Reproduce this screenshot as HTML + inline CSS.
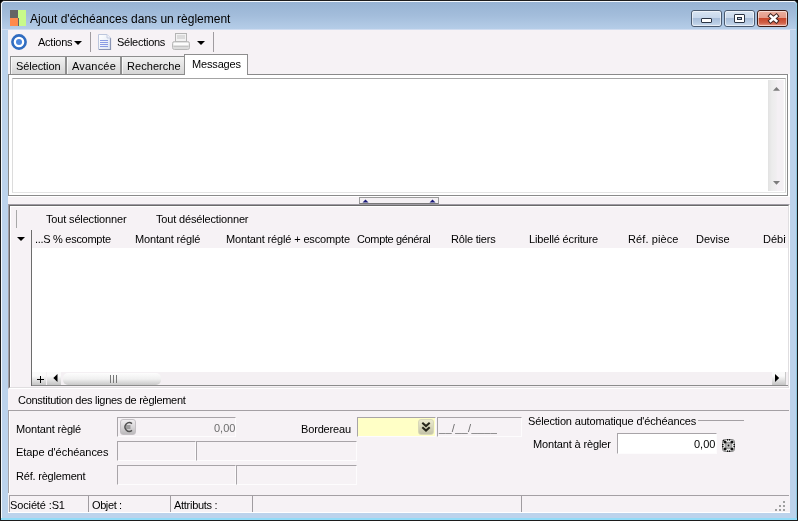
<!DOCTYPE html>
<html><head><meta charset="utf-8">
<style>
*{margin:0;padding:0;box-sizing:border-box}
html,body{width:798px;height:521px;overflow:hidden;background:#000}
body{position:relative;will-change:transform;font-family:"Liberation Sans",sans-serif;font-size:11px;color:#000}
.a{position:absolute}
.t{position:absolute;font-size:11px;line-height:13px;white-space:nowrap}
#frame{left:0;top:0;width:798px;height:521px;background:#bcd3ec;border-radius:5px 5px 0 0;border:1px solid #1c1c1c}
#hl{left:1px;top:1px;width:796px;height:519px;border:1px solid #f4f8fc;border-right-color:#8ec6de;border-radius:4px 4px 0 0;border-bottom:none}
#title{left:2px;top:2px;width:794px;height:27px;background:linear-gradient(#97b3d3,#a3bddb 50%,#b5cde8);border-radius:3px 3px 0 0}
#client{left:8px;top:30px;width:782px;height:482px;background:#f6f2f5;border-bottom:1px solid #fff}
.tb{position:absolute;top:10px;height:17px;width:31px;border:1px solid #4a5a70;border-radius:3px;
 background:linear-gradient(#d8e4f2,#c8d8ec 45%,#a6bcd8 46%,#b8cce4 80%,#cddcee)}
.tb:before{content:"";position:absolute;left:0;top:0;right:0;bottom:0;border:1px solid rgba(255,255,255,.55);border-radius:2px}
#close{background:linear-gradient(#eab0a0,#e49a88 45%,#c8482c 50%,#d06048 80%,#e8a090);border-color:#3a1a14}
.sep{position:absolute;width:1px;background:#a09ca0}
.tab{position:absolute;top:56px;height:19px;border:1px solid #8e8e8e;border-bottom:none;background:linear-gradient(#f2f2f2,#d4d4d4)}
.tab:before{content:"";position:absolute;left:0;top:0;width:1px;bottom:0;background:rgba(255,255,255,.7)}
.fld{position:absolute;border-top:1px solid #a8a4a8;border-left:1px solid #a8a4a8;border-right:1px solid #fdfcfd;border-bottom:1px solid #fdfcfd}
</style></head><body>
<div id="frame" class="a"></div>
<div id="hl" class="a"></div>
<div id="title" class="a"></div>
<!-- app icon -->
<div class="a" style="left:10px;top:10px;width:8px;height:8px;background:#646464"></div>
<div class="a" style="left:10px;top:18px;width:8px;height:8px;background:#ff8a4c"></div>
<div class="a" style="left:18px;top:10px;width:8px;height:16px;background:#c8fa8a"></div>
<div class="a" style="left:18px;top:18px;width:1px;height:8px;background:#646464"></div>
<div class="t" style="left:30px;top:12px;font-size:12px;line-height:14px">Ajout d'échéances dans un règlement</div>
<!-- title buttons -->
<div class="tb" style="left:691px"><div class="a" style="left:9px;top:7px;width:11px;height:5px;border:1px solid #2a3444;background:#fff;border-radius:1px"></div></div>
<div class="tb" style="left:724px"><div class="a" style="left:9px;top:3px;width:11px;height:9px;border:1px solid #2a3444;background:#fff;border-radius:1px"><div class="a" style="left:2px;top:2px;width:5px;height:3px;border:1px solid #2a3444;background:#b8c8dc"></div></div></div>
<div class="tb" id="close" style="left:757px;width:31px">
<svg class="a" style="left:9px;top:2px" width="13" height="11" viewBox="0 0 13 11"><path d="M3.6 3L9.4 8M9.4 3L3.6 8" stroke="#402420" stroke-width="4.4" stroke-linecap="square"/><path d="M3.6 3L9.4 8M9.4 3L3.6 8" stroke="#fff" stroke-width="2.4" stroke-linecap="square"/></svg>
</div>

<div class="a" style="left:2px;top:29px;width:794px;height:1px;background:#d0dcf0"></div>
<div id="client" class="a" style="height:483px"></div>
<div class="a" style="left:1px;top:518px;width:796px;height:2px;background:#92dcf8"></div>

<!-- toolbar -->
<svg class="a" style="left:11px;top:34px" width="16" height="16" viewBox="0 0 16 16"><circle cx="8" cy="8" r="6.6" fill="#fff" stroke="#2f6cc0" stroke-width="2.6"/><circle cx="8" cy="8" r="3" fill="#4a86dc"/></svg>
<div class="t" style="left:38px;top:36px;letter-spacing:-0.25px">Actions</div>
<svg class="a" style="left:74px;top:41px" width="8" height="4"><path d="M0 0H8L4 4Z" fill="#000"/></svg>
<div class="sep" style="left:90px;top:32px;height:20px"></div>
<svg class="a" style="left:98px;top:34px" width="14" height="16" viewBox="0 0 14 16"><defs><linearGradient id="dg" x1="0" y1="0" x2="1" y2="1"><stop offset="0" stop-color="#fff"/><stop offset="1" stop-color="#dde6f4"/></linearGradient></defs>
<path d="M0.5 0.5H9L12.5 4V15.5H0.5Z" fill="url(#dg)" stroke="#bcc6dc"/>
<path d="M12.5 4V15.5H1" fill="none" stroke="#8a94b4" stroke-width="1.2"/>
<path d="M9 0.5V4H12.5" fill="#eef2fa" stroke="#c4cce0"/>
<path d="M2 6.5H10M2 8.5H10M2 10.5H10M2 12.5H10" stroke="#8a9ce4"/>
</svg>
<div class="t" style="left:117px;top:36px;letter-spacing:-0.27px">Sélections</div>
<svg class="a" style="left:172px;top:33px" width="19" height="18" viewBox="0 0 19 18"><rect x="3.5" y="0.5" width="11" height="9" fill="#f2f2f2" stroke="#b4b4b4"/><path d="M5 3H13M5 5H13" stroke="#d4d4d4" stroke-width="1.5"/><rect x="0.5" y="8.5" width="17" height="8" rx="2" fill="#dedede" stroke="#b8b8b8"/><path d="M1.5 11H16.5" stroke="#fcfcfc" stroke-width="2.2"/><path d="M1.5 13.5H16.5" stroke="#c4c4c4" stroke-width="1"/><path d="M1.5 15H16.5" stroke="#d8d8d8" stroke-width="1.2"/></svg>
<svg class="a" style="left:197px;top:41px" width="8" height="4"><path d="M0 0H8L4 4Z" fill="#000"/></svg>
<div class="sep" style="left:213px;top:32px;height:20px"></div>

<!-- tabs -->
<div class="tab" style="left:10px;width:56px"></div>
<div class="tab" style="left:66px;width:55px"></div>
<div class="tab" style="left:121px;width:64px"></div>
<div class="a" style="left:184px;top:54px;width:64px;height:22px;border:1px solid #8e8e8e;border-bottom:none;background:#fff"></div>
<div class="t" style="left:16px;top:60px;letter-spacing:-0.09px">Sélection</div>
<div class="t" style="left:72px;top:60px;letter-spacing:0.2px">Avancée</div>
<div class="t" style="left:127px;top:60px;letter-spacing:0.05px">Recherche</div>
<div class="t" style="left:192px;top:58px;letter-spacing:-0.16px">Messages</div>

<!-- messages panel -->
<div class="a" style="left:8px;top:74px;width:780px;height:122px;border:1px solid #8a8a8a;background:#fff"></div>
<div class="a" style="left:185px;top:74px;width:62px;height:2px;background:#fff"></div>
<div class="a" style="left:12px;top:78px;width:774px;height:115px;border:1px solid #dcdcdc;border-top-color:#a4a4a4;border-right-color:#d8d8d8;border-bottom-color:#e4e4e4;background:#fff"></div>
<div class="a" style="left:768px;top:80px;width:16px;height:111px;background:linear-gradient(90deg,#e2e2e2,#ececec 25%,#f0eef0 50%,#f4f0f4 60%,#f4f0f4 95%,#fafafa)"></div>
<div class="a" style="left:788px;top:74px;width:2px;height:123px;background:#fff"></div>
<svg class="a" style="left:772px;top:86px" width="9" height="6"><path d="M1 4.8H8L4.5 1Z" fill="#7c7c7c"/></svg>
<svg class="a" style="left:772px;top:180px" width="9" height="6"><path d="M1 1H8L4.5 4.8Z" fill="#7c7c7c"/></svg>

<!-- splitter -->
<div class="a" style="left:8px;top:196px;width:781px;height:1px;background:#fff"></div>
<div class="a" style="left:359px;top:197px;width:80px;height:7px;border:1px solid #9c9c9c;border-bottom-color:#7a7a7a;background:#f4f0f3"></div>
<svg class="a" style="left:362px;top:199px" width="8" height="4"><path d="M0.5 3.5H6.5L3.5 0.5Z" fill="#1a1a78"/></svg>
<svg class="a" style="left:429px;top:199px" width="8" height="4"><path d="M0.5 3.5H6.5L3.5 0.5Z" fill="#1a1a78"/></svg>

<!-- grid panel -->
<div class="a" style="left:8px;top:204px;width:782px;height:185px;border-top:1px solid #a09ca4;border-left:1px solid #a09ca4;border-right:1px solid #fff;border-bottom:1px solid #fff"></div>
<div class="a" style="left:9px;top:205px;width:780px;height:183px;border-top:1px solid #6a6a6a;border-left:1px solid #6a6a6a;border-right:1px solid #e0dee0;border-bottom:1px solid #e0dee0"></div>
<div class="a" style="left:10px;top:206px;width:778px;height:1px;background:#fff"></div>
<div class="a" style="left:10px;top:206px;width:1px;height:181px;background:#fff"></div>
<div class="sep" style="left:16px;top:210px;height:18px;background:#a8a8a8"></div>
<div class="t" style="left:46px;top:213px;letter-spacing:-0.16px">Tout sélectionner</div>
<div class="t" style="left:156px;top:213px;letter-spacing:-0.16px">Tout désélectionner</div>

<svg class="a" style="left:17px;top:237px" width="8" height="4"><path d="M0 0H8L4 4Z" fill="#000"/></svg>
<div class="a" style="left:31px;top:248px;width:757px;height:125px;background:#fff"></div>
<div class="a" style="left:31px;top:230px;width:1px;height:156px;background:#6c6c6c"></div>
<div class="t" style="left:35px;top:233px;letter-spacing:-0.29px">...S % escompte</div>
<div class="t" style="left:135px;top:233px;letter-spacing:-0.15px">Montant réglé</div>
<div class="t" style="left:226px;top:233px;letter-spacing:-0.15px">Montant réglé + escompte</div>
<div class="t" style="left:357px;top:233px;letter-spacing:-0.36px">Compte général</div>
<div class="t" style="left:451px;top:233px;letter-spacing:-0.2px">Rôle tiers</div>
<div class="t" style="left:529px;top:233px;letter-spacing:-0.16px">Libellé écriture</div>
<div class="t" style="left:628px;top:233px;letter-spacing:0.09px">Réf. pièce</div>
<div class="t" style="left:696px;top:233px">Devise</div>
<div class="a" style="left:763px;top:230px;width:23px;height:17px;overflow:hidden"><div class="t" style="left:0;top:3px">Débit</div></div>
<!-- h scrollbar -->
<div class="a" style="left:32px;top:372px;width:756px;height:14px;background:#f4f0f3;border-bottom:1px solid #8c8c8c"></div>
<div class="a" style="left:32px;top:372px;width:14px;height:13px;background:linear-gradient(#fafafa 30%,#c4c4c4)"></div>
<svg class="a" style="left:37px;top:376px" width="7" height="7"><path d="M3.5 0V7M0 3.5H7" stroke="#000" stroke-width="1"/></svg>
<div class="a" style="left:47px;top:372px;width:14px;height:13px;background:linear-gradient(#fafafa 30%,#c4c4c4)"></div>
<svg class="a" style="left:53px;top:374px" width="5" height="9"><path d="M4.5 0V8L0.3 4Z" fill="#000"/></svg>
<div class="a" style="left:63px;top:373px;width:98px;height:12px;border-radius:5px;background:linear-gradient(#fdfdfd,#f0f0f0 50%,#c8c8c8)"></div>
<div class="a" style="left:110px;top:375px;width:1px;height:8px;background:#777"></div>
<div class="a" style="left:113px;top:375px;width:1px;height:8px;background:#777"></div>
<div class="a" style="left:116px;top:375px;width:1px;height:8px;background:#777"></div>
<div class="a" style="left:772px;top:372px;width:14px;height:13px;background:linear-gradient(#fafafa 30%,#c4c4c4);border-right:1px solid #c8c8c8"></div>
<svg class="a" style="left:775px;top:374px" width="5" height="9"><path d="M0 0V8L4.2 4Z" fill="#000"/></svg>

<!-- constitution header -->
<div class="t" style="left:18px;top:394px;letter-spacing:-0.29px">Constitution des lignes de règlement</div>
<div class="a" style="left:8px;top:410px;width:781px;height:1px;background:#a4a0a4"></div>
<div class="a" style="left:8px;top:410px;width:1px;height:83px;background:#a4a0a4"></div>
<div class="a" style="left:9px;top:411px;width:1px;height:82px;background:#fff"></div>

<!-- form -->
<div class="t" style="left:16px;top:423px;letter-spacing:-0.17px">Montant règlé</div>
<div class="t" style="left:16px;top:446px;letter-spacing:-0.05px">Etape d'échéances</div>
<div class="t" style="left:16px;top:470px;letter-spacing:-0.2px">Réf. règlement</div>
<div class="fld" style="left:117px;top:417px;width:119px;height:20px"></div>
<div class="a" style="left:120px;top:419px;width:16px;height:16px;border:1px solid #c4c0c4;border-radius:3px;background:linear-gradient(#f0eef0,#d8d6d8 50%,#bcbabc)"></div>
<svg class="a" style="left:122px;top:421px" width="12" height="12" viewBox="0 0 12 12"><path d="M3.5 5H8.5M3.5 7H8.5" stroke="#8a8a8a" stroke-width="1.4"/><path d="M10 2.6A4.3 4.3 0 1 0 10 9.4" fill="none" stroke="#4e4e4e" stroke-width="1.4"/></svg>
<div class="t" style="left:214px;top:422px;color:#6d6d6d">0,00</div>
<div class="fld" style="left:117px;top:441px;width:79px;height:20px"></div>
<div class="fld" style="left:196px;top:441px;width:161px;height:20px"></div>
<div class="fld" style="left:117px;top:465px;width:119px;height:20px"></div>
<div class="fld" style="left:236px;top:465px;width:121px;height:20px"></div>

<div class="t" style="left:301px;top:423px;letter-spacing:-0.16px">Bordereau</div>
<div class="fld" style="left:357px;top:417px;width:79px;height:20px;background:#ffffc6"></div>
<div class="a" style="left:418px;top:419px;width:16px;height:16px;border:1px solid #d8d8b8;border-radius:3px;background:linear-gradient(#ecebd0,#c4c3a8)"></div>
<svg class="a" style="left:421px;top:421px" width="10" height="12" viewBox="0 0 10 12"><path d="M1.3 1.8L5 5L8.7 1.8M1.3 6.3L5 9.5L8.7 6.3" stroke="#26261a" stroke-width="2.1" fill="none"/></svg>
<div class="fld" style="left:437px;top:417px;width:85px;height:20px"></div>
<div class="t" style="left:439px;top:422px;color:#6d6d6d;letter-spacing:0.3px">__/__/____</div>

<div class="t" style="left:528px;top:415px;letter-spacing:-0.16px">Sélection automatique d'échéances</div>
<div class="a" style="left:698px;top:420px;width:46px;height:1px;background:#a4a0a4"></div>
<div class="t" style="left:533px;top:438px;letter-spacing:-0.15px">Montant à règler</div>
<div class="fld" style="left:617px;top:433px;width:100px;height:21px;background:#fff"></div>
<div class="t" style="left:694px;top:438px">0,00</div>
<svg class="a" style="left:722px;top:439px" width="13" height="13" viewBox="0 0 13 13"><rect x="0.5" y="0.5" width="12" height="12" rx="2.5" fill="#f4f4f4" stroke="#8c8c8c"/><circle cx="6.5" cy="6.5" r="3.8" fill="#9c9c9c"/><circle cx="6.5" cy="6.5" r="2.2" fill="#c0c0c0"/><g fill="#111"><rect x="5" y="0" width="1.2" height="1.6"/><rect x="7" y="0" width="1.2" height="1.6"/><rect x="5" y="11.4" width="1.2" height="1.6"/><rect x="7" y="11.4" width="1.2" height="1.6"/><rect x="0" y="5" width="1.6" height="1.2"/><rect x="0" y="7" width="1.6" height="1.2"/><rect x="11.4" y="5" width="1.6" height="1.2"/><rect x="11.4" y="7" width="1.6" height="1.2"/><circle cx="3" cy="3" r="1.6"/><circle cx="10" cy="3" r="1.6"/><circle cx="3" cy="10" r="1.6"/><circle cx="10" cy="10" r="1.6"/><circle cx="1.5" cy="1.5" r="0.8"/><circle cx="6.5" cy="6.5" r="0.9"/></g></svg>

<!-- status bar -->
<div class="a" style="left:9px;top:495px;width:780px;height:17px;border-top:1px solid #a4a0a4;border-left:1px solid #a4a0a4"></div>
<div class="sep" style="left:88px;top:496px;height:16px"></div>
<div class="sep" style="left:170px;top:496px;height:16px"></div>
<div class="sep" style="left:252px;top:496px;height:16px"></div>
<div class="sep" style="left:521px;top:496px;height:16px"></div>
<div class="t" style="left:10px;top:499px;letter-spacing:-0.13px">Société :S1</div>
<div class="t" style="left:92px;top:499px;letter-spacing:-0.4px">Objet :</div>
<div class="t" style="left:174px;top:499px;letter-spacing:-0.28px">Attributs :</div>
<svg class="a" style="left:775px;top:501px" width="12" height="11"><g fill="#a0a0a0"><rect x="8" y="0" width="2" height="2"/><rect x="4" y="4" width="2" height="2"/><rect x="8" y="4" width="2" height="2"/><rect x="0" y="8" width="2" height="2"/><rect x="4" y="8" width="2" height="2"/><rect x="8" y="8" width="2" height="2"/></g></svg>
</body></html>
